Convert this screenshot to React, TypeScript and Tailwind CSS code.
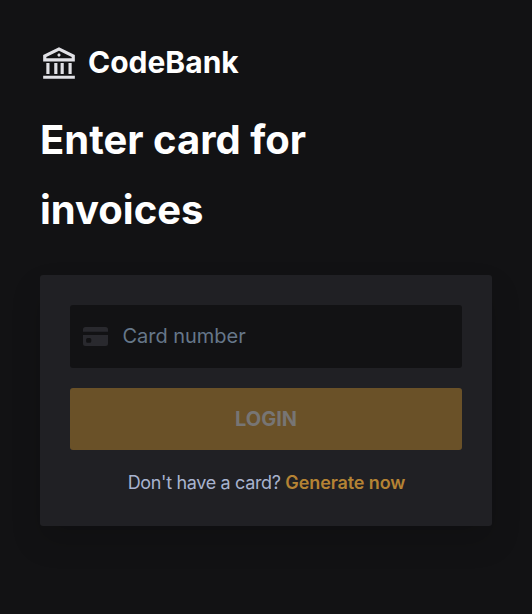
import { RiBankLine } from "react-icons/ri";

function CardIcon() {
  return (
    <svg className="h-[19px] w-[25px] shrink-0 text-[#29292e]" viewBox="0 0 25 19" fill="currentColor" aria-hidden="true">
      <path d="M2.5 0h20A2.5 2.5 0 0 1 25 2.5V4.7H0V2.5A2.5 2.5 0 0 1 2.5 0Z" />
      <path fillRule="evenodd" d="M0 8h25v8.5a2.5 2.5 0 0 1-2.5 2.5h-20A2.5 2.5 0 0 1 0 16.500ZM4.600 11a1.500 1.500 0 0 0-1.500 1.500v1.800a1.500 1.500 0 0 0 1.500 1.500h2.200a1.500 1.500 0 0 0 1.500-1.500v-1.800a1.500 1.500 0 0 0-1.500-1.500Z" />
    </svg>
  );
}

export default function App() {
  return (
    <main className="h-[614px] w-full bg-[#121214] px-10 pt-[43px] font-['Inter',sans-serif] text-white">
      <header className="flex h-10 items-center gap-[10px]">
        <RiBankLine className="size-[38px] text-[#e1e1e6]" />
        <span className="pb-0.5 text-[30px] font-bold">CodeBank</span>
      </header>
      <h1 className="mt-[22px] w-[300px] text-[40px] leading-[70px] font-bold">Enter card for invoices</h1>
      <section className="mt-[30px] h-[251px] rounded-[3px] bg-[#202024] p-[30px] shadow-[0_15px_30px_rgba(0,0,0,0.15)]">
        <div className="flex h-[63px] items-center rounded-[3px] bg-[#121214] pl-[13px]">
          <CardIcon />
          <input className="ml-[14.5px] pb-0.5 text-xl tracking-[-0.03px] outline-none placeholder:text-[#66778a]" placeholder="Card number" />
        </div>
        <button className="mt-5 h-[62px] w-full rounded-[3px] bg-[#6a5128] text-xl font-bold text-[#777574]">LOGIN</button>
        <p className="mt-[19px] pl-px text-center text-lg tracking-[-0.34px] text-[#a8b3cf]">
          Don't have a card? <a className="font-semibold tracking-[-0.11px] text-[#b58334]">Generate now</a>
        </p>
      </section>
    </main>
  );
}
